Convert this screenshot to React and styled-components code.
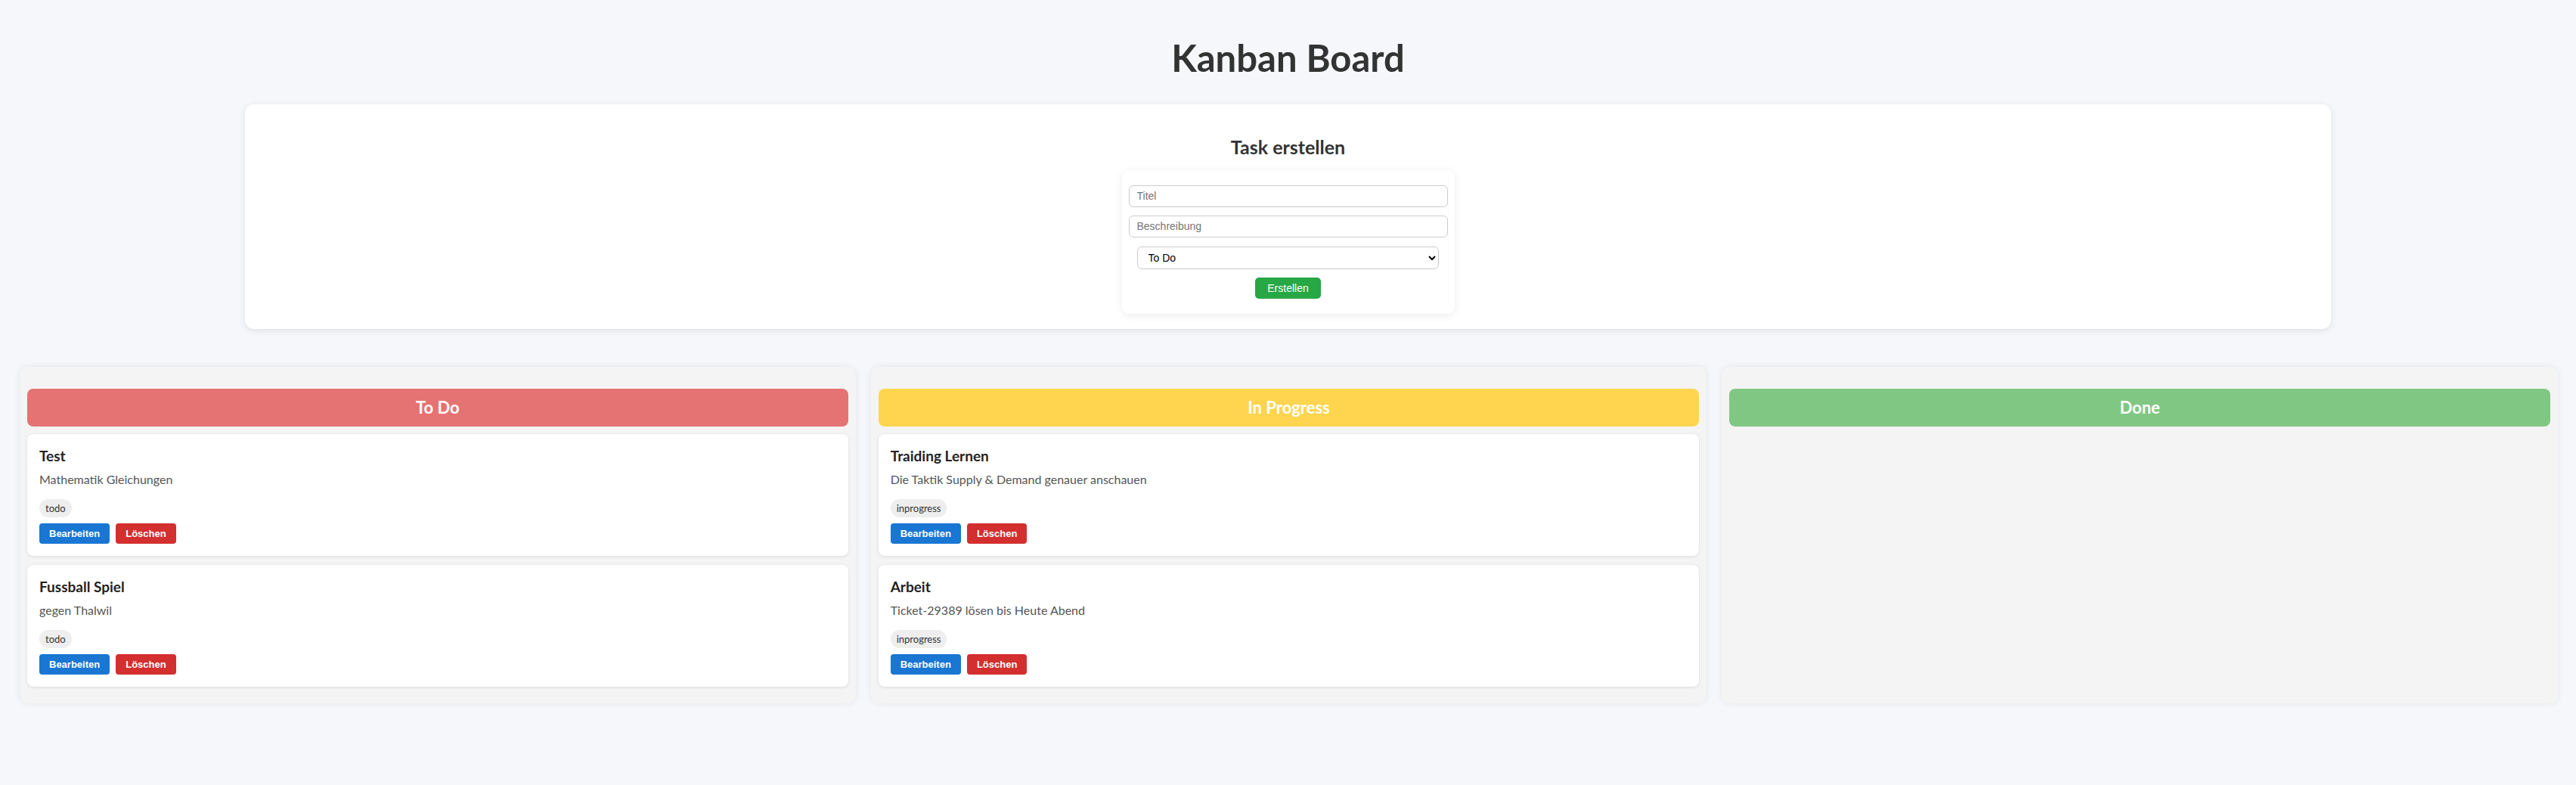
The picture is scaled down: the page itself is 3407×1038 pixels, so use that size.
import React, { useState } from "react";
import styled, { createGlobalStyle } from "styled-components";

const GlobalStyle = createGlobalStyle`
  body {
    margin: 0;
    background: #f5f7fa;
    font-family: Lato, "Open Sans", sans-serif;
    color: #333;
  }
`;

const Page = styled.div`
  min-height: 1038px;
`;

const PageTitle = styled.h1`
  margin: 47px 0 32px;
  font-size: 49px;
  line-height: 1.2;
  font-weight: 700;
  text-align: center;
  color: #333;
`;

const CreateCard = styled.section`
  width: 81%;
  margin: 0 auto;
  box-sizing: border-box;
  padding: 20px;
  background: #fff;
  border-radius: 12px;
  box-shadow: 0 2px 10px rgba(0, 0, 0, 0.1);
`;

const CreateTitle = styled.h2`
  margin: 22px 0 16px;
  font-size: 25px;
  line-height: 29px;
  font-weight: 700;
  text-align: center;
  color: #333;
`;

const Form = styled.form`
  width: 440px;
  margin: 0 auto;
  box-sizing: border-box;
  padding: 20px 9px;
  display: flex;
  flex-direction: column;
  align-items: stretch;
  background: #fff;
  border-radius: 10px;
  box-shadow: 0 2px 12px rgba(0, 0, 0, 0.08);
`;

const Input = styled.input`
  height: 29px;
  box-sizing: border-box;
  margin-bottom: 11px;
  padding: 0 10px;
  border: 1px solid #ccc;
  border-radius: 6px;
  font-family: "Liberation Sans", Arial, sans-serif;
  font-size: 14px;
  color: #222;
  outline: none;

  &::placeholder {
    color: #757575;
  }
`;

const Select = styled.select`
  height: 30px;
  box-sizing: border-box;
  margin: 1px 12px 11px 11px;
  padding: 0 10px;
  border: 1px solid #ccc;
  border-radius: 6px;
  background: #fff;
  font-family: "Liberation Sans", Arial, sans-serif;
  font-size: 14px;
  font-weight: 400;
  color: #000;
`;

const CreateButton = styled.button`
  align-self: center;
  height: 28px;
  padding: 0 16px;
  border: none;
  border-radius: 5px;
  background: #28a745;
  color: #fff;
  font-family: "Liberation Sans", Arial, sans-serif;
  font-size: 14px;
  cursor: pointer;
`;

const Board = styled.div`
  display: flex;
  gap: 20px;
  align-items: stretch;
  margin-top: 50px;
  padding: 0 24px 0 26px;
`;

const Column = styled.div`
  flex: 1;
  min-height: 445px;
  box-sizing: border-box;
  padding: 10px;
  background: #f4f4f4;
  border-radius: 10px;
  box-shadow: 0 0 8px rgba(0, 0, 0, 0.08);
`;

const ColumnHeader = styled.h2`
  margin: 19px 0 10px;
  height: 50px;
  box-sizing: border-box;
  padding: 12px 0;
  line-height: 26px;
  font-size: 22px;
  font-weight: 700;
  text-align: center;
  color: #fff;
  background: ${({ $color }) => $color};
  border-radius: 8px;
`;

const Card = styled.div`
  margin-bottom: 12px;
  padding: 17px 16px 16px;
  background: #fff;
  border-radius: 8px;
  box-shadow: 0 1px 4px rgba(0, 0, 0, 0.1);
`;

const CardTitle = styled.h3`
  margin: 0;
  font-size: 19px;
  line-height: 23px;
  font-weight: 700;
  color: #222;
`;

const CardText = styled.p`
  margin: 10px 0 0;
  font-size: 16px;
  line-height: 20px;
  color: #555;
`;

const Tag = styled.span`
  display: inline-block;
  margin-top: 16px;
  padding: 4px 8px;
  line-height: 16px;
  font-size: 13px;
  color: #333;
  background: #eee;
  border-radius: 12px;
`;

const Actions = styled.div`
  display: flex;
  gap: 8px;
  margin-top: 8px;
`;

const ActionButton = styled.button`
  height: 27px;
  padding: 0 13px;
  border: none;
  border-radius: 4px;
  background: ${({ $danger }) => ($danger ? "#d32f2f" : "#1976d2")};
  color: #fff;
  font-family: "Liberation Sans", Arial, sans-serif;
  font-size: 13px;
  font-weight: 700;
  cursor: pointer;
`;

const columns = [
  { key: "todo", title: "To Do", color: "#e57373" },
  { key: "inprogress", title: "In Progress", color: "#ffd54f" },
  { key: "done", title: "Done", color: "#81c784" },
];

const initialTasks = [
  { id: 1, title: "Test", description: "Mathematik Gleichungen", status: "todo" },
  { id: 2, title: "Fussball Spiel", description: "gegen Thalwil", status: "todo" },
  {
    id: 3,
    title: "Traiding Lernen",
    description: "Die Taktik Supply & Demand genauer anschauen",
    status: "inprogress",
  },
  {
    id: 4,
    title: "Arbeit",
    description: "Ticket-29389 lösen bis Heute Abend",
    status: "inprogress",
  },
];

export default function App() {
  const [tasks, setTasks] = useState(initialTasks);
  const [title, setTitle] = useState("");
  const [description, setDescription] = useState("");
  const [status, setStatus] = useState("todo");

  const handleSubmit = (e) => {
    e.preventDefault();
    if (!title) return;
    setTasks([...tasks, { id: Date.now(), title, description, status }]);
    setTitle("");
    setDescription("");
  };

  return (
    <Page>
      <GlobalStyle />
      <PageTitle>Kanban Board</PageTitle>

      <CreateCard>
        <CreateTitle>Task erstellen</CreateTitle>
        <Form onSubmit={handleSubmit}>
          <Input placeholder="Titel" value={title} onChange={(e) => setTitle(e.target.value)} />
          <Input
            placeholder="Beschreibung"
            value={description}
            onChange={(e) => setDescription(e.target.value)}
          />
          <Select value={status} onChange={(e) => setStatus(e.target.value)}>
            <option value="todo">To Do</option>
            <option value="inprogress">In Progress</option>
            <option value="done">Done</option>
          </Select>
          <CreateButton type="submit">Erstellen</CreateButton>
        </Form>
      </CreateCard>

      <Board>
        {columns.map((col) => (
          <Column key={col.key}>
            <ColumnHeader $color={col.color}>{col.title}</ColumnHeader>
            {tasks
              .filter((t) => t.status === col.key)
              .map((task) => (
                <Card key={task.id}>
                  <CardTitle>{task.title}</CardTitle>
                  <CardText>{task.description}</CardText>
                  <Tag>{task.status}</Tag>
                  <Actions>
                    <ActionButton>Bearbeiten</ActionButton>
                    <ActionButton
                      $danger
                      onClick={() => setTasks(tasks.filter((t) => t.id !== task.id))}
                    >
                      Löschen
                    </ActionButton>
                  </Actions>
                </Card>
              ))}
          </Column>
        ))}
      </Board>
    </Page>
  );
}
